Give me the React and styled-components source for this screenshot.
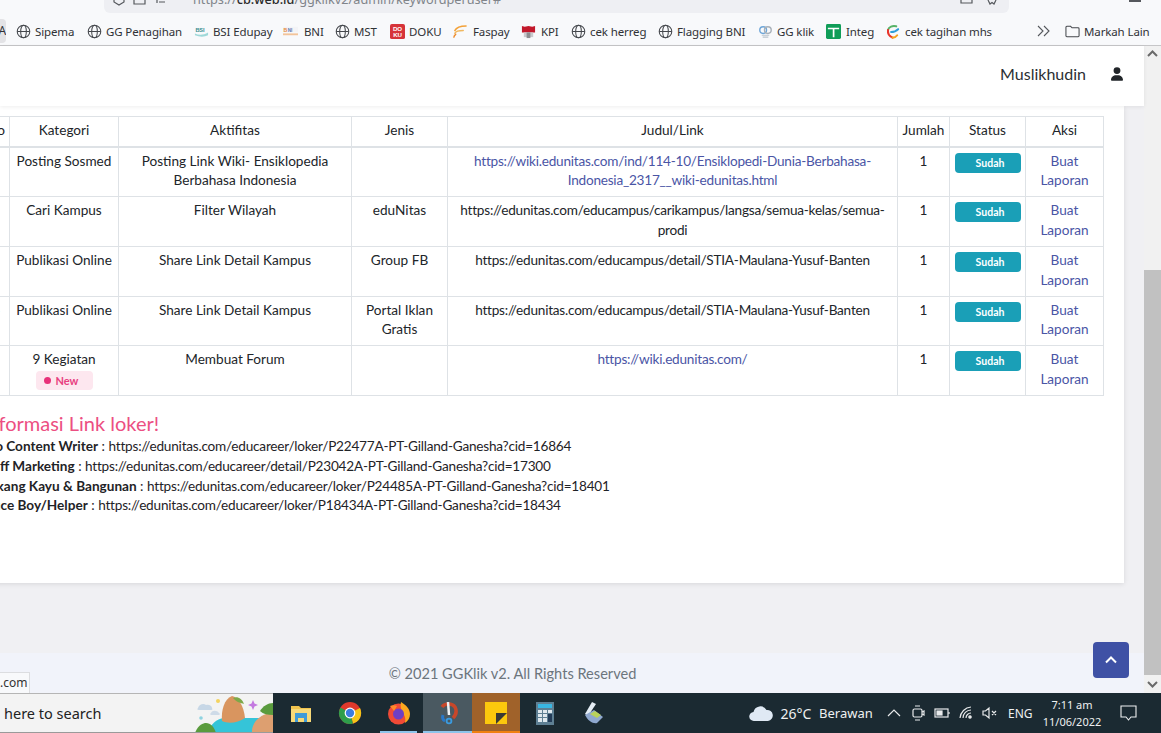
import React from "react";
import styled, { createGlobalStyle } from "styled-components";

const Global = createGlobalStyle`
  html, body { margin: 0; padding: 0; height: 100%; overflow: hidden; background: #f0f0f3; }
  * { box-sizing: border-box; }
`;

const Shell = styled.div`
  width: 1161px; height: 733px; display: flex; flex-direction: column; overflow: hidden;
  font-family: "Lato", "Noto Sans", sans-serif; color: #212529;
`;

/* ---------- browser chrome ---------- */
const Chrome = styled.header`
  height: 46px; flex: none; background: #f8f9fb; border-bottom: 1px solid #c6c6c8;
  font-family: "Noto Sans", sans-serif; display: flex; flex-direction: column;
`;
const AddressRow = styled.div`display: flex; height: 13px; padding-left: 104px;`;
const AddressBar = styled.div`
  width: 905px; height: 13px; background: #eeeff3; border-radius: 0 0 6px 6px; overflow: hidden;
  display: flex; align-items: flex-end; position: relative;
`;
const WindowDash = styled.div`width: 12px; height: 2px; margin-left: 120px; background: #55585d;`;
const NavGlyphs = styled.svg`width: 89px; height: 13px; flex: none;`;
const Url = styled.div`
  font-size: 12.7px; line-height: 13px; height: 13px; color: #80848a; margin-top: -8px;
  transform: translateY(-7px); white-space: nowrap;
  b { font-weight: 500; color: #2a2a2a; }
`;
const BarEnd = styled.svg`width: 50px; height: 13px; margin-left: auto; flex: none;`;
const Bookmarks = styled.nav`
  flex: 1; display: flex; align-items: center; padding-top: 4px; font-size: 11.5px; letter-spacing: -.12px; color: #303236;
`;
const ActiveStub = styled.div`
  width: 6px; height: 24px; margin-right: 10px; background: #e3e3e6; border-radius: 0 4px 4px 0;
  font-size: 12px; line-height: 24px; overflow: hidden; direction: rtl; flex: none;
`;
const Bookmark = styled.a`
  display: flex; align-items: center; gap: ${(p) => p.$g || 4}px; width: ${(p) => p.$w}px; flex: none; white-space: nowrap;
`;
const Fav = styled.svg`width: 15px; height: 15px; flex: none;`;
const OverflowMark = styled.svg`width: 14px; height: 12px; margin-left: 45px; margin-right: 14px; flex: none;`;

/* ---------- viewport ---------- */
const Viewport = styled.div`flex: 1; display: flex; min-height: 0; position: relative;`;
const Page = styled.main`flex: 1; min-width: 0; display: flex; flex-direction: column; background: #f0f0f3; position: relative;`;
const TopBar = styled.div`
  height: 60px; flex: none; background: #fff; display: flex; align-items: center; justify-content: flex-end;
  gap: 25px; padding: 0 21px 5px 0; font-size: 16px; color: #2b2f33; box-shadow: 0 1px 4px rgba(0,0,0,.07);
  position: relative; z-index: 1;
`;
const Card = styled.section`
  margin: 0 20px 0 -38px; padding: 10px 20px 0; height: 477px; flex: none; background: #fff;
  box-shadow: 0 1px 5px rgba(0,0,0,.1); overflow: hidden;
`;
const Table = styled.table`
  width: 1121px; table-layout: fixed; border-collapse: collapse; font-size: 13.6px; line-height: 19.6px; text-align: center;
  th, td { border: 1px solid #dee2e6; vertical-align: top; padding: 4px 5px 5.5px; }
  th { font-weight: 400; padding: 4px 0 5px; border-bottom-width: 2px; }
`;
const UrlCell = styled.td`letter-spacing: -.23px; white-space: nowrap;`;
const Link = styled.a`color: #4a55a5;`;
const Badge = styled.span`
  display: block; width: 66px; height: 20px; margin-top: 1px; border-radius: 4px; background: #1a9fb7; color: #fff;
  font-size: 10.5px; font-weight: 700; line-height: 20px; text-align: center; padding-left: 4px;
`;
const StatusCell = styled.td`&& { padding: 4px 5px 0; }`;
const NewPill = styled.span`
  display: inline-flex; align-items: center; gap: 5px; width: 57px; height: 19px; margin-top: 1px; padding-left: 8px;
  background: #fde7ef; border-radius: 4px; color: #e8407f; font-size: 11px; font-weight: 700;
  &::before { content: ""; width: 7px; height: 7px; border-radius: 50%; background: #e8327a; }
`;
const Notice = styled.div`margin-top: 15px; font-size: 13.6px; line-height: 19.6px; color: #1f2327;`;
const NoticeTitle = styled.h4`margin: 0 0 2px; font-size: 20px; line-height: 24px; font-weight: 400; color: #ec4f82;`;
const NoticeLine = styled.div`white-space: nowrap; margin-left: ${(p) => p.$nudge}px; strong { font-weight: 700; }`;
const NoticeUrl = styled.span`letter-spacing: -.22px;`;

const Footer = styled.footer`
  margin-top: auto; height: 40px; flex: none; background: #f1f3fa; display: flex; align-items: center; justify-content: center;
  padding-right: 119px; font-size: 14.6px; color: #6c757d;
`;
const ToTop = styled.button`
  position: absolute; left: 1093px; top: 596px; width: 36px; height: 36px; padding: 0; border: 0; border-radius: 4px;
  background: #3f51a5; display: flex; align-items: center; justify-content: center;
`;
const StatusTip = styled.div`
  position: absolute; left: 0; bottom: 0; width: 30px; height: 21px; background: #f8f9fb; border: 1px solid #dcdde0; border-left: 0; border-bottom: 0;
  font-family: "Noto Sans", sans-serif; font-size: 12px; line-height: 20px; color: #333; text-align: right; padding-right: 3px;
`;
const Scrollbar = styled.aside`width: 17px; flex: none; background: #f1f1f1; display: flex; flex-direction: column; align-items: center;`;
const ScrollArrow = styled.svg`width: 11px; height: 7px; flex: none; margin: ${(p) => p.$m};`;
const Thumb = styled.div`width: 17px; height: 405px; background: #c1c1c1; margin-top: auto;`;

/* ---------- taskbar ---------- */
const Taskbar = styled.footer`
  height: 40px; flex: none; display: flex; background: #1b2a32; font-family: "Noto Sans", sans-serif; color: #eef0f1; overflow: hidden;
`;
const Search = styled.div`
  width: 273px; flex: none; background: #f3f3f3; border-top: 1px solid #b5b5b5; border-bottom: 1px solid #9a9a9a; color: #222; font-size: 14.5px;
  display: flex; align-items: center; padding-left: 4px; overflow: hidden; position: relative;
`;
const Scenery = styled.svg`position: absolute; right: 0; top: -1px; width: 83px; height: 40px;`;
const Slots = styled.div`display: flex; padding-left: 3px; height: 40px;`;
const Slot = styled.div`
  width: ${(p) => p.$w}px; height: 40px; flex: none; display: flex; align-items: center; justify-content: center; position: relative;
  background: ${(p) => p.$bg || "transparent"};
  &::after {
    content: ""; position: absolute; left: ${(p) => p.$inset || 0}px; right: ${(p) => p.$inset || 0}px; bottom: 0; height: 2px;
    background: ${(p) => p.$line || "transparent"};
  }
`;
const AppIcon = styled.svg`width: 24px; height: 24px; margin-top: -1px;`;
const Tray = styled.div`margin-left: auto; display: flex; height: 40px; align-items: center;`;
const TrayCell = styled.div`
  width: ${(p) => p.$w}px; flex: none; display: flex; align-items: center; justify-content: ${(p) => p.$j || "center"};
  font-size: ${(p) => p.$fs || 14}px; padding-left: ${(p) => p.$pl || 0}px; padding-right: ${(p) => p.$pr || 0}px; white-space: nowrap;
`;
const Clock = styled.div`width: 58px; flex: none; font-size: 11px; line-height: 17px; text-align: center; white-space: nowrap; display: flex; flex-direction: column; align-items: center;`;
const TrayIcon = styled.svg`width: 18px; height: 18px; fill: none; stroke: #e8eaeb; stroke-width: 1.2;`;

const Globe = () => (
  <Fav viewBox="0 0 16 16" fill="none" stroke="#44474c" strokeWidth="1.1">
    <circle cx="8" cy="8" r="6.7" />
    <ellipse cx="8" cy="8" rx="3" ry="6.7" />
    <path d="M1.3 8h13.4" />
  </Fav>
);
const Fav2 = ({ kind }) => {
  if (kind === "bsi") return (
    <Fav viewBox="0 0 16 16">
      <text x="1.5" y="8" fontSize="6" fontWeight="700" fill="#3a8f90" fontFamily="Liberation Sans">BSI</text>
      <path d="M1 10c4 2 9 2 14-1v3c-4 2-9 2-14 0z" fill="#9fd8d8" />
    </Fav>
  );
  if (kind === "bni") return (
    <Fav viewBox="0 0 16 16">
      <rect x="0" y="3" width="16" height="6" fill="#f3f3f6" />
      <text x="0.5" y="8" fontSize="5.5" fontWeight="700" fill="#e58a3c" fontFamily="Liberation Sans">B</text>
      <text x="5" y="8" fontSize="5" fontWeight="700" fill="#5b7fb0" fontFamily="Liberation Sans">NI</text>
      <rect x="0" y="10" width="16" height="2" fill="#f2c49a" />
    </Fav>
  );
  if (kind === "doku") return (
    <Fav viewBox="0 0 16 16">
      <rect width="16" height="16" rx="2" fill="#d6343a" />
      <text x="8" y="7.2" textAnchor="middle" fontSize="6.6" fontWeight="700" fill="#fff" fontFamily="Liberation Sans">DO</text>
      <text x="8" y="14" textAnchor="middle" fontSize="6.6" fontWeight="700" fill="#fff" fontFamily="Liberation Sans">KU</text>
    </Fav>
  );
  if (kind === "faspay") return (
    <Fav viewBox="0 0 16 16" fill="none" strokeLinecap="round">
      <path d="M3 7C5 3 9 2 15 2" stroke="#f3a23a" strokeWidth="1.6" />
      <path d="M3 10c1-2 4-3 9-3" stroke="#f0b860" strokeWidth="1.5" />
      <path d="M2 14c0-1 1-2 2-3" stroke="#ee8a2a" strokeWidth="1.5" />
    </Fav>
  );
  if (kind === "kpi") return (
    <Fav viewBox="0 0 16 16">
      <path d="M1 2l3 1 4-1 4 1 3-1v7H1z" fill="#c2182b" />
      <rect x="3" y="9" width="10" height="5" fill="#c9c9cc" />
      <rect x="6" y="9" width="4" height="6" fill="#8d8d90" />
    </Fav>
  );
  if (kind === "gg") return (
    <Fav viewBox="0 0 16 16" fill="none">
      <circle cx="5.5" cy="6.5" r="3.6" stroke="#6ea6d8" strokeWidth="1.5" />
      <circle cx="10.5" cy="6.5" r="3.6" stroke="#a8b0b8" strokeWidth="1.5" />
      <path d="M4 12h8M5 14h6" stroke="#b9c3cd" strokeWidth="1.2" />
    </Fav>
  );
  if (kind === "integ") return (
    <Fav viewBox="0 0 16 16">
      <rect width="16" height="16" rx="1.5" fill="#0f9d58" />
      <path d="M2 4h12v1.600H9V14H7.200V5.600H2z" fill="#fff" />
    </Fav>
  );
  return (
    <Fav viewBox="0 0 16 16" fill="none" strokeWidth="2.2" strokeLinecap="round">
      <path d="M12 2.500C8 1.500 4 3 3.200 6.500" stroke="#58b368" />
      <path d="M3.200 6.500C2.800 10 4.500 13 8 14.500" stroke="#e8352c" />
      <path d="M8 14.500c2 0 4-1 5-2.500" stroke="#f3a21f" />
      <path d="M6.500 8.500C9 8.500 12 7.500 14 5.500" stroke="#2f9ed8" />
    </Fav>
  );
};

const marks = [
  ["Sipema", 71], ["GG Penagihan", 107], ["BSI Edupay", 89, "bsi"], ["BNI", 52, "bni", 6], ["MST", 55], ["DOKU", 62, "doku"],
  ["Faspay", 69, "faspay", 6], ["KPI", 50, "kpi", 5], ["cek herreg", 87], ["Flagging BNI", 100], ["GG klik", 68, "gg"],
  ["Integ", 59, "integ", 5], ["cek tagihan mhs", 107, "tagihan", 5],
];

const rows = [
  { k: "Posting Sosmed", a: "Posting Link Wiki- Ensiklopedia Berbahasa Indonesia", j: "", link: true,
    u: <>https://wiki.edunitas.com/ind/114-10/Ensiklopedi-Dunia-Berbahasa-<br />Indonesia_2317__wiki-edunitas.html</> },
  { k: "Cari Kampus", a: "Filter Wilayah", j: "eduNitas",
    u: <>https://edunitas.com/educampus/carikampus/langsa/semua-kelas/semua-<br />prodi</> },
  { k: "Publikasi Online", a: "Share Link Detail Kampus", j: "Group FB",
    u: "https://edunitas.com/educampus/detail/STIA-Maulana-Yusuf-Banten" },
  { k: "Publikasi Online", a: "Share Link Detail Kampus", j: "Portal Iklan Gratis",
    u: "https://edunitas.com/educampus/detail/STIA-Maulana-Yusuf-Banten" },
  { k: <>9 Kegiatan<br /><NewPill>New</NewPill></>, a: "Membuat Forum", j: "", link: true, u: "https://wiki.edunitas.com/" },
];

const jobs = [
  ["Info Content Writer", "https://edunitas.com/educareer/loker/P22477A-PT-Gilland-Ganesha?cid=16864", -3],
  ["Staff Marketing", "https://edunitas.com/educareer/detail/P23042A-PT-Gilland-Ganesha?cid=17300", -1],
  ["Tukang Kayu & Bangunan", "https://edunitas.com/educareer/loker/P24485A-PT-Gilland-Ganesha?cid=18401", 0],
  ["Office Boy/Helper", "https://edunitas.com/educareer/loker/P18434A-PT-Gilland-Ganesha?cid=18434", -5],
];

const cols = [27, 109, 233, 96, 450, 52, 76, 78];

export default function App() {
  return (
    <Shell>
      <Global />
      <Chrome>
        <AddressRow>
          <AddressBar>
            <NavGlyphs viewBox="0 0 89 13" fill="none" stroke="#55585d" strokeWidth="1.2">
              <path d="M10 0v2l5 3 5-3V0" />
              <path d="M30 0v4h11V0" />
              <path d="M55 2h6M53 0v3" />
            </NavGlyphs>
            <Url>https://<b>cb.web.id</b>/ggklikv2/admin/keywordperuser#</Url>
            <BarEnd viewBox="0 0 50 13" fill="none" stroke="#55585d" strokeWidth="1.2">
              <path d="M2 0v3h11V0" />
              <path d="M29 0l2 4 2-1.500L35 4l2-4" />
            </BarEnd>
          </AddressBar>
          <WindowDash />
        </AddressRow>
        <Bookmarks>
          <ActiveStub>A</ActiveStub>
          {marks.map(([t, w, kind, g]) => (
            <Bookmark key={t} $w={w} $g={g}>
              {kind ? <Fav2 kind={kind} /> : <Globe />}
              {t}
            </Bookmark>
          ))}
          <OverflowMark viewBox="0 0 14 12" fill="none" stroke="#55585d" strokeWidth="1.1">
            <path d="M1 1l5 5-5 5M7 1l5 5-5 5" />
          </OverflowMark>
          <Bookmark $w={96}>
            <Fav viewBox="0 0 16 16" fill="none" stroke="#44474c" strokeWidth="1.1">
              <path d="M1 3.500a1 1 0 0 1 1-1h4l1.500 1.500H14a1 1 0 0 1 1 1v7.500a1 1 0 0 1-1 1H2a1 1 0 0 1-1-1z" />
            </Fav>
            Markah Lain
          </Bookmark>
        </Bookmarks>
      </Chrome>

      <Viewport>
        <Page>
          <TopBar>
            Muslikhudin
            <svg width="12" height="14" viewBox="0 0 448 512" fill="#212529">
              <path d="M224 256a128 128 0 1 0 0-256 128 128 0 1 0 0 256zm-45.700 48C79.800 304 0 383.800 0 482.300 0 498.700 13.300 512 29.700 512h388.600c16.400 0 29.700-13.300 29.700-29.700C448 383.800 368.200 304 269.700 304z" />
            </svg>
          </TopBar>
          <Card>
            <Table>
              <colgroup>
                {cols.map((w, i) => <col key={i} style={{ width: w }} />)}
              </colgroup>
              <thead>
                <tr>
                  {["No", "Kategori", "Aktifitas", "Jenis", "Judul/Link", "Jumlah", "Status", "Aksi"].map((h) => <th key={h}>{h}</th>)}
                </tr>
              </thead>
              <tbody>
                {rows.map((r, i) => (
                  <tr key={i}>
                    <td>{i + 1}</td>
                    <td>{r.k}</td>
                    <td>{r.a}</td>
                    <td>{r.j}</td>
                    <UrlCell>{r.link ? <Link>{r.u}</Link> : r.u}</UrlCell>
                    <td>1</td>
                    <StatusCell><Badge>Sudah</Badge></StatusCell>
                    <td><Link>Buat Laporan</Link></td>
                  </tr>
                ))}
              </tbody>
            </Table>
            <Notice>
              <NoticeTitle>Informasi Link loker!</NoticeTitle>
              {jobs.map(([t, u, n]) => (
                <NoticeLine key={t} $nudge={n}><strong>{t}</strong> : <NoticeUrl>{u}</NoticeUrl></NoticeLine>
              ))}
            </Notice>
          </Card>
          <Footer>© 2021 GGKlik v2. All Rights Reserved</Footer>
          <ToTop aria-label="Ke atas">
            <svg width="12" height="8" viewBox="0 0 12 8" fill="none" stroke="#fff" strokeWidth="2"><path d="M1 6.500l5-5 5 5" /></svg>
          </ToTop>
          <StatusTip>.com</StatusTip>
        </Page>
        <Scrollbar>
          <ScrollArrow $m="4px 0 0" viewBox="0 0 11 7" fill="none" stroke="#6a6a6a" strokeWidth="2"><path d="M1 6l4.500-4.500L10 6" /></ScrollArrow>
          <Thumb />
          <ScrollArrow $m="6px 0 5px" viewBox="0 0 11 7" fill="none" stroke="#6a6a6a" strokeWidth="2"><path d="M1 1l4.500 4.500L10 1" /></ScrollArrow>
        </Scrollbar>
      </Viewport>

      <Taskbar>
        <Search>
          here to search
          <Scenery viewBox="0 0 83 40">
            <path d="M8 15c1-4 6-5 8-3 3-1 6 1 6 3 1 2 0 2-2 2H9c-2 0-2-1-1-2z" fill="#c7d7e6" />
            <path d="M21 20c1-3 6-3 8 0 1 0 1 2 0 2h-8c-1 0-1-2 0-2z" fill="#cfdbe8" />
            <circle cx="28" cy="8" r="2" fill="#f4d35e" />
            <circle cx="11" cy="25" r="1.800" fill="#8fd3e0" />
            <path d="M63 7l1.500 3.500L68 12l-3.500 1.500L63 17l-1.500-3.500L58 12l3.500-1.500z" fill="#c479e0" />
            <path d="M18 40c2-8 8-14 16-15h49v15z" fill="#35c4d8" />
            <path d="M5 40c3-8 8-10 11-10 5 0 8 4 10 10z" fill="#5a9b3d" />
            <path d="M32 28c-1-10 2-22 10-25 6 1 12 10 13 22-7 5-17 6-23 3z" fill="#d9955f" />
            <path d="M43 5c4-2 9 0 11 6-3-1-8-2-11-6z" fill="#7da849" />
            <path d="M62 38c0-9 9-18 21-18v20H62z" fill="#dd9f70" />
            <path d="M70 18c3-5 8-8 13-8v12c-5 0-10-1-13-4z" fill="#5a9b3d" />
          </Scenery>
        </Search>
        <Slots>
          <Slot $w={49}>
            <AppIcon viewBox="0 0 24 24">
              <path d="M2 5h8l2 2h10v2H2z" fill="#f1c44e" />
              <rect x="2" y="8" width="20" height="13" fill="#f7d978" />
              <rect x="6" y="12" width="12" height="9" fill="#3f9bd8" />
              <rect x="9" y="17" width="6" height="4" fill="#f7d978" />
            </AppIcon>
          </Slot>
          <Slot $w={49}>
            <AppIcon viewBox="0 0 24 24">
              <circle cx="12" cy="12" r="11" fill="#e0382c" />
              <path d="M12 12L22 7a11 11 0 0 1-7 15.600z" fill="#f5c518" />
              <path d="M12 12l3 10.600A11 11 0 0 1 2.500 6.500z" fill="#2e9e4b" />
              <circle cx="12" cy="12" r="5.400" fill="#fff" />
              <circle cx="12" cy="12" r="4.200" fill="#3b7de0" />
            </AppIcon>
          </Slot>
          <Slot $w={49} $line="#8ec4ea" $inset={6}>
            <AppIcon viewBox="0 0 24 24">
              <circle cx="11.500" cy="13" r="10.500" fill="#ef4a36" />
              <path d="M14 1c5 3 9 7 9 12 0 4-2 7-5 9 1-4 0-8-3-11-1-3-2-7-1-10z" fill="#fba81f" />
              <circle cx="11.500" cy="13" r="5.500" fill="#6e3fc4" />
              <path d="M3 5c2-1 5-1 7 0l-3 5z" fill="#ff8a2a" />
            </AppIcon>
          </Slot>
          <Slot $w={49} $bg="#4a5961" $line="#8ec4ea">
            <AppIcon viewBox="0 0 24 24" fill="none">
              <path d="M6 6c3-4 10-4 13 0 2 4 1 8-2 11" stroke="#c8472a" strokeWidth="3.500" />
              <path d="M7 14c-1 3 0 5 2 6" stroke="#2878c8" strokeWidth="3" />
              <path d="M12 1l1 13" stroke="#eef0f2" strokeWidth="2.500" />
              <circle cx="13" cy="20" r="2.400" stroke="#3a9be0" strokeWidth="1.800" />
            </AppIcon>
          </Slot>
          <Slot $w={48} $bg="#a0622a" $line="#f08010">
            <AppIcon viewBox="0 0 24 24">
              <rect x="1" y="1" width="22" height="22" fill="#fcc80d" />
              <path d="M12 23V12h11z" fill="#3a3a35" />
            </AppIcon>
          </Slot>
          <Slot $w={49}>
            <AppIcon viewBox="0 0 24 24">
              <rect x="3" y="1" width="18" height="23" fill="#5e7f93" />
              <rect x="5" y="3" width="14" height="4" fill="#39b6e2" />
              <path d="M5 9h4v3H5zM10 9h4v3h-4zM15 9h4v3h-4zM5 13h4v3H5zM10 13h4v3h-4zM5 17h4v4H5zM10 17h4v4h-4z" fill="#dfe8ee" />
              <rect x="15" y="13" width="4" height="8" fill="#233c58" />
            </AppIcon>
          </Slot>
          <Slot $w={50}>
            <AppIcon viewBox="0 0 24 24">
              <path d="M10 1l4 2-8 12-3-2z" fill="#e5edf5" />
              <path d="M3 14l9-5 9 7-6 6c-4 1-9-2-12-8z" fill="#8fa8cf" />
              <path d="M8 13l5-3 6 4-4 3z" fill="#b9d25a" />
            </AppIcon>
          </Slot>
        </Slots>
        <Tray>
          <TrayCell $w={32}>
            <svg width="24" height="17" viewBox="0 0 24 17"><path d="M5 16a4.500 4.500 0 0 1-.5-9A7 7 0 0 1 17.500 5 5.500 5.500 0 0 1 19 16z" fill="#dfe9f4" /></svg>
          </TrayCell>
          <TrayCell $w={38}>26°C</TrayCell>
          <TrayCell $w={66} $j="flex-start" $pl={4} $fs={13}>Berawan</TrayCell>
          <TrayCell $w={25}>
            <TrayIcon viewBox="0 0 18 18"><path d="M3 12l6-6 6 6" /></TrayIcon>
          </TrayCell>
          <TrayCell $w={24}>
            <TrayIcon viewBox="0 0 18 18"><rect x="4" y="5" width="9" height="8" rx="1.500" /><path d="M13 8l2-1v4l-2-1M6 2h5M6 16h5" /></TrayIcon>
          </TrayCell>
          <TrayCell $w={24}>
            <TrayIcon viewBox="0 0 18 18"><rect x="2" y="5" width="13" height="8" /><path d="M16 8v2" /><rect x="4" y="7" width="5" height="4" fill="#e8eaeb" /></TrayIcon>
          </TrayCell>
          <TrayCell $w={24}>
            <TrayIcon viewBox="0 0 18 18"><path d="M3 14a12 12 0 0 1 11-11M6 14a8 8 0 0 1 8-8M9 14a5 5 0 0 1 5-5" /><circle cx="13" cy="13" r="1.200" fill="#e8eaeb" /></TrayIcon>
          </TrayCell>
          <TrayCell $w={24}>
            <TrayIcon viewBox="0 0 18 18"><path d="M2 7h2.500L8 4v10L4.500 11H2zM11 7l4 4M15 7l-4 4" /></TrayIcon>
          </TrayCell>
          <TrayCell $w={41} $fs={12} $j="flex-start" $pl={6}>ENG</TrayCell>
          <Clock><span>7:11 am</span><span>11/06/2022</span></Clock>
          <TrayCell $w={60} $pr={6}>
            <svg width="17" height="17" viewBox="0 0 17 17" fill="none" stroke="#eef0f1" strokeWidth="1.1"><path d="M1 1h15v11h-5l-2.500 3L6 12H1z" /></svg>
          </TrayCell>
        </Tray>
      </Taskbar>
    </Shell>
  );
}
